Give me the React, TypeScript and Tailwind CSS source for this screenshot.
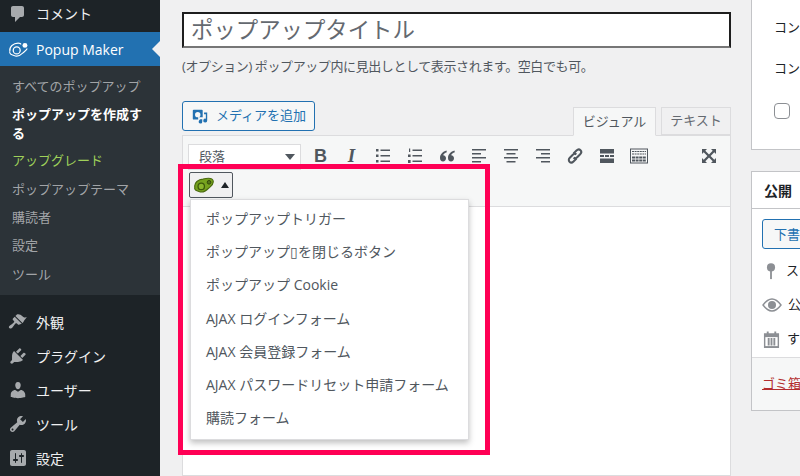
const font = "[font-family:'Open_Sans','Noto_Sans_CJK_JP',sans-serif]";

function Dash({ d, className = "" }: { d: string; className?: string }) {
  return (
    <svg viewBox="0 0 20 20" className={`w-5 h-5 fill-current ${className}`}>
      <path d={d} />
    </svg>
  );
}

const icons = {
  comments: "M5 2h9c1.1 0 2 .9 2 2v7c0 1.1-.9 2-2 2h-2l-5 5v-5H5c-1.1 0-2-.9-2-2V4c0-1.1.9-2 2-2z",
  appearance:
    "M14.48 11.06L7.41 3.99l1.5-1.5c.5-.56 2.3-.47 3.51.32 1.21.8 1.43 1.28 2.91 2.1 1.18.64 2.45.82 3.23.1.58-.53-.64 1.26-2 2.9-1.08 1.3-1.1 3.15-2.58 3.15zM13.77 11.77L6.7 4.7 4.93 6.47c-.39.39-.39 1.02 0 1.41l1.06 1.06c.39.39.39 1.03 0 1.42-.6.6-1.43 1.15-2.21 1.78-.78.62-2.96 1.77-2.96 2.95 0 1.5 1.32 1.5 1.96 1.5 1.18 0 2.33-2.18 2.95-2.96.63-.78 1.18-1.61 1.78-2.21.39-.39 1.03-.39 1.42 0l1.06 1.06c.39.39 1.02.39 1.41 0z",
  plugins:
    "M13.11 4.36L9.87 7.6 8 5.73l3.24-3.24c.35-.34 1.05-.2 1.56.32.52.51.66 1.21.31 1.55zm-8 1.77l.91-1.12 9.01 9.01-1.19.84c-.71.71-2.63 1.16-3.82 1.16H6.14L4.9 17.26c-.59.59-1.54.59-2.12 0-.59-.58-.59-1.53 0-2.12l1.24-1.24v-3.88c0-1.13.4-3.19 1.09-3.89zm7.26 3.97l3.24-3.24c.34-.35 1.04-.21 1.55.31.52.51.66 1.21.31 1.55l-3.24 3.25z",
  users:
    "M10 9.25c-2.27 0-2.73-3.44-2.73-3.44C7 4.02 7.82 2 9.97 2c2.16 0 2.98 2.02 2.71 3.81 0 0-.41 3.44-2.68 3.44zm0 2.57L12.72 10c2.39 0 4.52 2.33 4.52 4.53v2.49s-3.65 1.13-7.24 1.13c-3.65 0-7.24-1.13-7.24-1.13v-2.49c0-2.25 1.94-4.48 4.47-4.48z",
  tools:
    "M16.68 9.77c-1.34 1.34-3.3 1.67-4.95.99l-5.41 6.52c-.99.99-2.59.99-3.58 0s-.99-2.59 0-3.57l6.52-5.42c-.68-1.65-.35-3.61.99-4.95 1.28-1.28 3.12-1.62 4.72-1.06l-2.89 2.89 2.82 2.82 2.86-2.87c.53 1.58.18 3.39-1.08 4.65zM3.81 16.21c.4.39 1.04.39 1.43 0 .4-.4.4-1.04 0-1.43-.39-.4-1.03-.4-1.43 0-.39.39-.39 1.03 0 1.43z",
  settings:
    "M18 16V4c0-1.1-.9-2-2-2H4c-1.1 0-2 .9-2 2v12c0 1.1.9 2 2 2h12c1.1 0 2-.9 2-2zM8 11h1c.55 0 1 .45 1 1s-.45 1-1 1H8v1.5c0 .28-.22.5-.5.5s-.5-.22-.5-.5V13H6c-.55 0-1-.45-1-1s.45-1 1-1h1V5.5c0-.28.22-.5.5-.5s.5.22.5.5V11zm5-2h-1c-.55 0-1-.45-1-1s.45-1 1-1h1V5.5c0-.28.22-.5.5-.5s.5.22.5.5V7h1c.55 0 1 .45 1 1s-.45 1-1 1h-1v5.5c0 .28-.22.5-.5.5s-.5-.22-.5-.5V9z",
};

function MenuRow({ icon, label, h = "h-[34px]" }: { icon: string; label: string; h?: string }) {
  return (
    <div className={`flex items-center ${h} text-[14px] text-[#f0f0f1]`}>
      <div className="w-9 flex justify-center text-[#a7aaad]">
        <Dash d={icon} />
      </div>
      <span>{label}</span>
    </div>
  );
}

function PopupMakerLogo({ green }: { green?: boolean }) {
  if (green) {
    return (
      <svg viewBox="0 0 24 18" className="w-[22px] h-[17px]">
        <path d="M2 11C1 6 6 2 11 2c4-1 10-2 11 2s-3 6-5 8-5 5-9 4-7-2-6-5z" fill="#76a21e" stroke="#4a6a10" strokeWidth="1.2" />
        <circle cx="9" cy="10" r="3.5" fill="#8ab52c" stroke="#3d5a0c" strokeWidth="1.4" />
        <circle cx="17.5" cy="5.5" r="2" fill="#55751a" stroke="#2f4508" strokeWidth="1" />
      </svg>
    );
  }
  return (
    <svg viewBox="0 0 24 18" className="w-[22px] h-[17px] fill-none stroke-white">
      <path d="M2 11C1 6 6 2 11 2c2 0 3 .5 3 1.5M21 8c-1 2-3 3-5 5s-4 4-8 3-7-2-6-5" strokeWidth="1.2" />
      <circle cx="9.5" cy="10" r="3.8" strokeWidth="1.4" />
      <circle cx="18.5" cy="4.5" r="2.7" fill="#fff" stroke="none" />
    </svg>
  );
}

function ToolIcon({ children }: { children: React.ReactNode }) {
  return (
    <svg viewBox="0 0 20 20" className="w-5 h-5 fill-[#50575e]">
      {children}
    </svg>
  );
}

const listBars = (
  <>
    <rect x="7.5" y="3.5" width="9.5" height="1.5" />
    <rect x="7.5" y="9" width="9.5" height="1.5" />
    <rect x="7.5" y="14.5" width="9.5" height="1.5" />
  </>
);

const toolbar = [
  { key: "bold", w: "w-[31px]", el: <span className="text-[#50575e] text-[18px] font-bold [font-family:'Liberation_Sans',sans-serif]">B</span> },
  { key: "italic", w: "w-[31px]", el: <span className="text-[#50575e] text-[19px] font-bold italic [font-family:'Liberation_Serif',serif]">I</span> },
  {
    key: "ul",
    w: "w-[32px]",
    el: (
      <ToolIcon>
        {listBars}
        <rect x="3" y="3" width="2.5" height="2.5" />
        <rect x="3" y="8.5" width="2.5" height="2.5" />
        <rect x="3" y="14" width="2.5" height="2.5" />
      </ToolIcon>
    ),
  },
  {
    key: "ol",
    w: "w-[32px]",
    el: (
      <ToolIcon>
        {listBars}
        <rect x="4" y="2.5" width="1.2" height="3.5" />
        <rect x="3" y="8.5" width="2.6" height="2.5" />
        <rect x="3" y="14" width="2.6" height="3" />
      </ToolIcon>
    ),
  },
  {
    key: "quote",
    w: "w-[32px]",
    el: (
      <ToolIcon>
        <path d="M9.5 4.5C6 5.5 3 8 3 12c0 2 1.2 3.5 3 3.5S9 14 9 12.3 7.8 9.5 6.2 9.3C6.5 7.8 8 6.8 9.8 6.2zM17.5 4.5C14 5.5 11 8 11 12c0 2 1.2 3.5 3 3.5s3-1.5 3-3.2-1.2-2.8-2.8-3C14.5 7.8 16 6.8 17.8 6.2z" />
      </ToolIcon>
    ),
  },
  {
    key: "left",
    w: "w-[32px]",
    el: (
      <ToolIcon>
        <rect x="3" y="3" width="14" height="1.5" />
        <rect x="3" y="7" width="9" height="1.5" />
        <rect x="3" y="11" width="14" height="1.5" />
        <rect x="3" y="15" width="9" height="1.5" />
      </ToolIcon>
    ),
  },
  {
    key: "center",
    w: "w-[32px]",
    el: (
      <ToolIcon>
        <rect x="3" y="3" width="14" height="1.5" />
        <rect x="5.5" y="7" width="9" height="1.5" />
        <rect x="3" y="11" width="14" height="1.5" />
        <rect x="5.5" y="15" width="9" height="1.5" />
      </ToolIcon>
    ),
  },
  {
    key: "right",
    w: "w-[32px]",
    el: (
      <ToolIcon>
        <rect x="3" y="3" width="14" height="1.5" />
        <rect x="8" y="7" width="9" height="1.5" />
        <rect x="3" y="11" width="14" height="1.5" />
        <rect x="8" y="15" width="9" height="1.5" />
      </ToolIcon>
    ),
  },
  {
    key: "link",
    w: "w-[32px]",
    el: (
      <svg viewBox="0 0 20 20" className="w-5 h-5 fill-none stroke-[#50575e]" strokeWidth="2">
        <path d="M8.5 7.5l3-3c1.3-1.3 3-1.3 4-.3s1 2.7-.3 4l-3 3c-1.1 1.1-2.6 1.2-3.6.4" />
        <path d="M11.5 12.5l-3 3c-1.3 1.3-3 1.3-4 .3s-1-2.7.3-4l3-3c1.1-1.1 2.6-1.2 3.6-.4" />
      </svg>
    ),
  },
  {
    key: "more",
    w: "w-[32px]",
    el: (
      <ToolIcon>
        <rect x="3" y="3" width="14" height="4.5" />
        <rect x="3" y="9" width="4" height="2" />
        <rect x="8" y="9" width="4" height="2" />
        <rect x="13" y="9" width="4" height="2" />
        <rect x="3" y="12.5" width="14" height="4.5" />
      </ToolIcon>
    ),
  },
  {
    key: "kitchen",
    w: "w-[32px]",
    el: (
      <svg viewBox="0 0 20 20" className="w-5 h-5">
        <rect x="1.5" y="3" width="17" height="14" fill="none" stroke="#50575e" strokeWidth="1" />
        <path d="M3 5.5h14M3 8h14" stroke="#50575e" strokeWidth="1.2" strokeDasharray="2 .6" />
        <path d="M3 11.5h14M3 14.5h14" stroke="#50575e" strokeWidth="2.2" strokeDasharray="3 .6" />
      </svg>
    ),
  },
];

const menuItems = [
  "ポップアップトリガー",
  "ポップアップ▯を閉じるボタン",
  "ポップアップ Cookie",
  "AJAX ログインフォーム",
  "AJAX 会員登録フォーム",
  "AJAX パスワードリセット申請フォーム",
  "購読フォーム",
];

export default function App() {
  return (
    <div className={`relative w-[800px] h-[476px] overflow-hidden flex bg-[#f0f0f1] ${font}`}>
      {/* sidebar */}
      <aside className="w-[160px] shrink-0 bg-[#1d2327] flex flex-col">
        <div className="h-[32px] pb-[5px] flex flex-col justify-center">
          <MenuRow icon={icons.comments} label="コメント" h="h-[27px]" />
        </div>
        <div className="relative flex items-center h-[34px] bg-[#2271b1] text-white text-[14px]">
          <div className="w-9 flex justify-center pl-[1px]">
            <PopupMakerLogo />
          </div>
          <span>Popup Maker</span>
          <span className="absolute right-0 top-[9px] border-y-[8px] border-r-[8px] border-y-transparent border-r-[#f0f0f1]" />
        </div>
        <div className="bg-[#2c3338] h-[229px] pt-[6px] text-[13px] text-[#c3c4c7cc]">
          <div className="px-3 h-[28.33px] leading-[28px]">すべてのポップアップ</div>
          <div className="px-3 pt-[5px] pb-[3px] leading-[19px] font-semibold text-white">ポップアップを作成する</div>
          <div className="px-3 h-[28.33px] leading-[28px] text-[#9fd15a]">アップグレード</div>
          <div className="px-3 h-[28.33px] leading-[28px]">ポップアップテーマ</div>
          <div className="px-3 h-[28.33px] leading-[28px]">購読者</div>
          <div className="px-3 h-[28.33px] leading-[28px]">設定</div>
          <div className="px-3 h-[28.33px] leading-[28px]">ツール</div>
        </div>
        <div className="pt-[10px]">
          <MenuRow icon={icons.appearance} label="外観" />
          <MenuRow icon={icons.plugins} label="プラグイン" />
          <MenuRow icon={icons.users} label="ユーザー" />
          <MenuRow icon={icons.tools} label="ツール" />
          <MenuRow icon={icons.settings} label="設定" />
        </div>
      </aside>

      {/* main */}
      <main className="flex-1 flex pl-[22px] gap-[20px] min-w-0">
        <div className="w-[549px] shrink-0 pt-[12px] flex flex-col">
          <div className="h-[36px] bg-white border-2 border-[#1e1e1e] border-b-[#767676] pl-[7px] flex items-center text-[22.4px] text-[#646970]">
            ポップアップタイトル
          </div>
          <p className="mt-[8px] text-[13px] leading-[20px] tracking-[-0.4px] text-[#50575e]">
            (オプション) ポップアップ内に見出しとして表示されます。空白でも可。
          </p>
          <div className="mt-[25px] flex justify-between items-end h-[34px]">
            <div className="mb-[4px] h-[30px] w-[133px] bg-[#f6f7f7] border border-[#2271b1] rounded-[3px] flex items-center gap-[7px] pl-[8px] text-[13px] text-[#2271b1]">
              <svg viewBox="0 0 20 20" className="w-[18px] h-[18px] fill-[#2271b1]">
                <path d="M3 3h9a1 1 0 011 1v7.5H8V14H3a1 1 0 01-1-1V4a1 1 0 011-1zm4.5 2.5a3 3 0 100 6 3 3 0 000-6z" />
                <path d="M14.5 6H18v9a2.2 2.2 0 11-1.5-2V8h-2zM9 13.5h3.5v2.8a2 2 0 11-1.5-1.9z" />
              </svg>
              <span>メディアを追加</span>
            </div>
            <div className="flex gap-[5px] text-[13px] -mb-px z-10">
              <div className="h-[29px] w-[83px] border border-[#dcdcde] border-b-[#f6f7f7] bg-[#f6f7f7] text-[#50575e] flex items-center justify-center">
                ビジュアル
              </div>
              <div className="h-[28px] w-[70px] border border-[#dcdcde] bg-[#f0f0f1] text-[#646970] flex items-center justify-center">
                テキスト
              </div>
            </div>
          </div>

          <div className="relative flex-1 border border-[#dcdcde] bg-white">
            <div className="bg-[#f6f7f7] border-b border-[#dcdcde] h-[71px] flex flex-col">
              <div className="h-[35px] flex items-center pl-[5px] pt-[2px]">
                <div className="w-[113px] h-[26px] -mb-[4px] bg-white border border-[#dcdcde] flex items-center justify-between pl-[10px] pr-[5px] text-[13px] text-[#50575e]">
                  段落
                  <span className="border-x-[5px] border-t-[6px] border-x-transparent border-t-[#50575e]" />
                </div>
                <div className="ml-[4px] pt-[3px] flex flex-1 items-center">
                  {toolbar.map((t) => (
                    <div key={t.key} className={`${t.w} h-[24px] flex items-center justify-center`}>
                      {t.el}
                    </div>
                  ))}
                  <div className="ml-auto mr-[11px] w-5 h-5">
                    <svg viewBox="0 0 20 20" className="w-5 h-5 fill-[#50575e]">
                      <path d="M3 3h5L6.3 4.7 10 8.4l3.7-3.7L12 3h5v5l-1.7-1.7L11.6 10l3.7 3.7L17 12v5h-5l1.7-1.7L10 11.6l-3.7 3.7L8 17H3v-5l1.7 1.7L8.4 10 4.7 6.3 3 8z" />
                    </svg>
                  </div>
                </div>
              </div>
              <div className="h-[35px] flex items-start pl-[6px] pt-[1px]">
                <div className="w-[44px] h-[26px] border border-[#50575e] rounded-[2px] bg-[#f0f0f1] flex items-center justify-center gap-[6px]">
                  <PopupMakerLogo green />
                  <span className="border-x-[4px] border-b-[6px] border-x-transparent border-b-[#1d2327]" />
                </div>
              </div>
            </div>

            {/* dropdown menu */}
            <div className="absolute left-[7px] top-[63px] w-[279px] h-[241px] bg-white border border-[#dcdcde] shadow-[0_3px_6px_rgba(0,0,0,0.25)] pt-[2px] text-[14px] text-[#50575e]">
              {menuItems.map((m) => (
                <div key={m} className="h-[33.2px] pl-[15px] flex items-center whitespace-nowrap">
                  {m}
                </div>
              ))}
            </div>
          </div>
        </div>

        {/* right column */}
        <div className="flex-1 min-w-0 overflow-hidden flex flex-col text-[13px] text-[#1d2327] whitespace-nowrap">
          <div className="h-[150px] bg-white border border-t-0 border-r-0 border-[#c3c4c7] pl-[22px]">
            <div className="mt-[17px] leading-[20px]">コンテンツ</div>
            <div className="mt-[21px] leading-[20px]">コンテンツ</div>
            <div className="mt-[25px] w-[16px] h-[16px] bg-white border border-[#8c8f94] rounded-[4px]" />
          </div>
          <div className="mt-[21px] h-[240px] bg-white border border-r-0 border-[#c3c4c7] flex flex-col">
            <div className="h-[37px] border-b border-[#c3c4c7] flex items-center pl-[12px] text-[14px] font-semibold">公開</div>
            <div className="pl-[10px] pt-[10px] flex-1">
              <div className="w-[60px] h-[30px] border border-[#2271b1] rounded-[3px] bg-[#f6f7f7] text-[#2271b1] pl-[11px] leading-[28px]">下書き</div>
              <div className="mt-[5px] h-[34px] flex items-center gap-[6px]">
                <svg viewBox="0 0 20 20" className="w-[18px] h-[18px] shrink-0 fill-[#8c8f94]">
                  <circle cx="10" cy="6" r="4.5" />
                  <rect x="9" y="9" width="2" height="10" />
                </svg>
                <span>ステータス</span>
              </div>
              <div className="h-[34px] flex items-center gap-[6px]">
                <svg viewBox="0 0 20 14" className="w-[20px] h-[14px] shrink-0">
                  <path d="M1 7c3-4 6-6 9-6s6 2 9 6c-3 4-6 6-9 6S4 11 1 7z" fill="none" stroke="#8c8f94" strokeWidth="1.4" />
                  <circle cx="10" cy="7" r="4" fill="#8c8f94" />
                </svg>
                <span>公開状態</span>
              </div>
              <div className="h-[34px] flex items-center gap-[7px] pl-[1px]">
                <svg viewBox="0 0 18 18" className="w-[17px] h-[18px] shrink-0">
                  <path d="M1 3h3V1h2v2h6V1h2v2h3v16H1z" fill="#8c8f94" />
                  <path d="M2.5 7h13v9.500h-13z" fill="#fff" />
                  <path d="M5 8h2v8H5zM8 8h2v8H8zM11 8h2v8h-2z" fill="#8c8f94" />
                </svg>
                <span>すぐに公開</span>
              </div>
            </div>
            <div className="h-[53px] bg-[#f6f7f7] border-t border-[#dcdcde] pl-[10px] flex items-center text-[#b32d2e] underline">
              ゴミ箱へ移動
            </div>
          </div>
        </div>
      </main>

      {/* annotation frame */}
      <div className="absolute left-[178px] top-[164px] w-[312px] h-[291px] border-[5px] border-[#ff0055] pointer-events-none" />
    </div>
  );
}
